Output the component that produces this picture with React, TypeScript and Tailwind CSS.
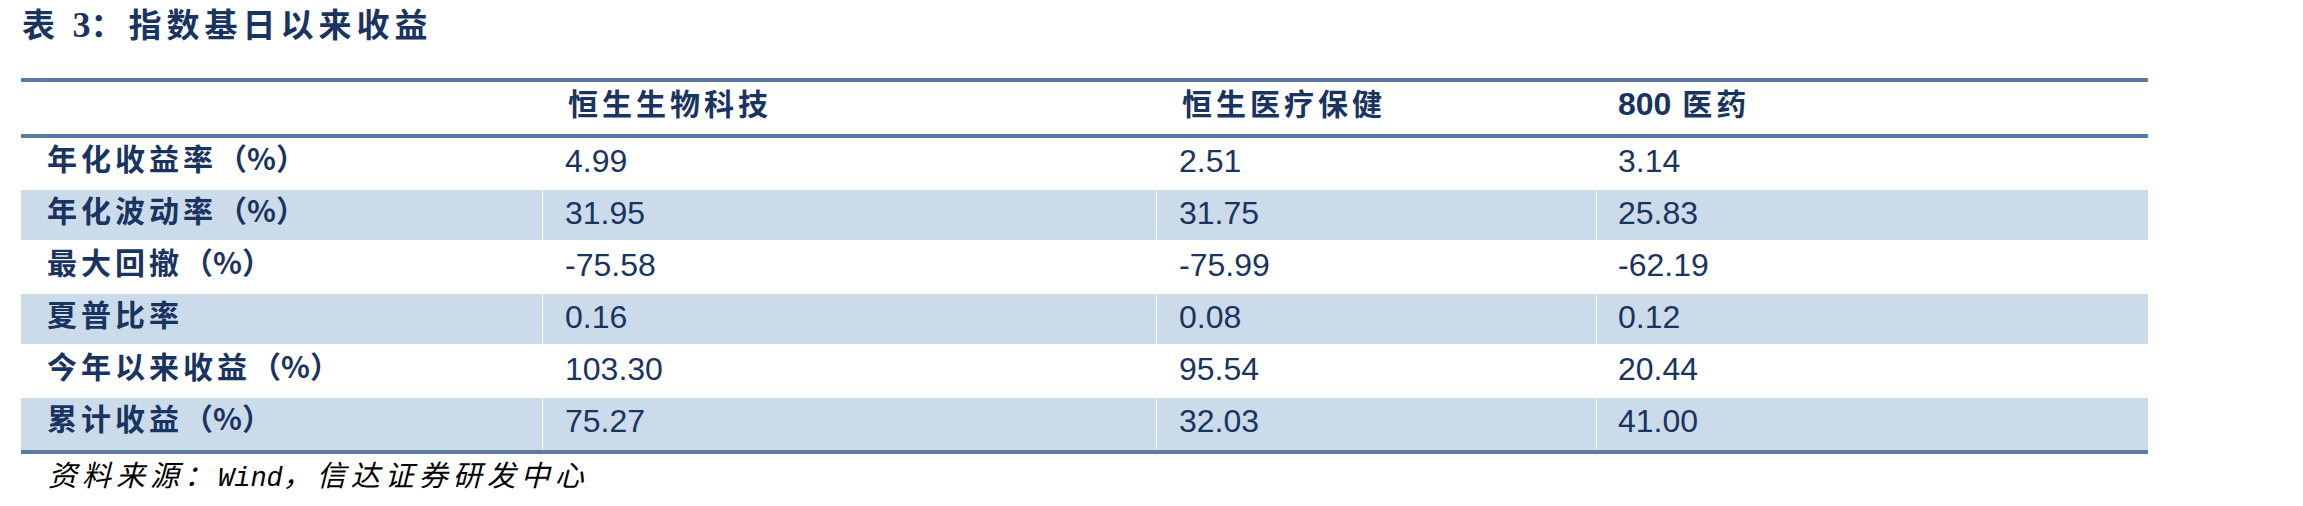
import React from 'react';

type Row = { label: string; unit: boolean; values: string[]; shaded: boolean };

const rows: Row[] = [
  { label: '年化收益率', unit: true, values: ['4.99', '2.51', '3.14'], shaded: false },
  { label: '年化波动率', unit: true, values: ['31.95', '31.75', '25.83'], shaded: true },
  { label: '最大回撤', unit: true, values: ['-75.58', '-75.99', '-62.19'], shaded: false },
  { label: '夏普比率', unit: false, values: ['0.16', '0.08', '0.12'], shaded: true },
  { label: '今年以来收益', unit: true, values: ['103.30', '95.54', '20.44'], shaded: false },
  { label: '累计收益', unit: true, values: ['75.27', '32.03', '41.00'], shaded: true },
];

const cjk = "font-['Noto_Sans_CJK_SC',sans-serif]";
const num = "font-['Liberation_Sans',Arial,sans-serif]";
const cols = 'grid grid-cols-[521px_613px_439px_551px] gap-x-px';

export default function App() {
  return (
    <div className="w-[2303px] h-[506px] bg-white text-[#1a3461] overflow-hidden">
      <div className={`pl-[22px] pt-[7px] text-[33px] leading-[33px] font-bold tracking-[5px] whitespace-nowrap ${cjk}`}>
        表 <span className="font-['Liberation_Serif',serif] text-[36px] tracking-normal">3</span>：指数基日以来收益
      </div>

      <div className="ml-[21px] mt-[36px] w-[2127px]">
        <div className="border-t-4 border-b-4 border-[#5b7ba3]">
          <div className={`${cols} h-[52px]`}>
            <div />
            {['恒生生物科技', '恒生医疗保健'].map((h) => (
              <div key={h} className={`pl-[25px] pt-[5px] text-[30px] leading-[30px] font-bold tracking-[4px] ${cjk}`}>
                {h}
              </div>
            ))}
            <div className={`pl-[21px] pt-[5px] text-[30px] leading-[30px] font-bold tracking-[4px] ${cjk}`}>
              <span className={`${num} text-[32px] tracking-normal`}>800</span> 医药
            </div>
          </div>
        </div>

        <div className="border-b-4 border-[#5b7ba3]">
          {rows.map((r, i) => {
            const bg = r.shaded ? 'bg-[#cbdbea]' : '';
            const sep = r.shaded && i < rows.length - 1 ? 'border-b-2 border-white' : '';
            return (
              <div key={r.label} className={`${cols} h-[52px]`}>
                <div
                  className={`pl-[26px] pt-[4px] text-[30px] leading-[30px] font-bold tracking-[4px] whitespace-nowrap ${cjk} ${bg} ${sep}`}
                >
                  {r.label}
                  {r.unit && <span className="tracking-normal">（%）</span>}
                </div>
                {r.values.map((v, j) => (
                  <div
                    key={j}
                    className={`${j === 2 ? 'pl-[21px]' : 'pl-[22px]'} pt-[7px] text-[32px] leading-[32px] ${num} ${bg} ${sep}`}
                  >
                    {v}
                  </div>
                ))}
              </div>
            );
          })}
        </div>
      </div>

      <div className={`pl-[48px] mt-[5px] text-[29px] leading-[29px] italic tracking-[5px] text-black whitespace-nowrap ${cjk}`}>
        资料来源：<span className="font-['Liberation_Mono',monospace] text-[27px] tracking-normal">Wind</span>，信达证券研发中心
      </div>
    </div>
  );
}
